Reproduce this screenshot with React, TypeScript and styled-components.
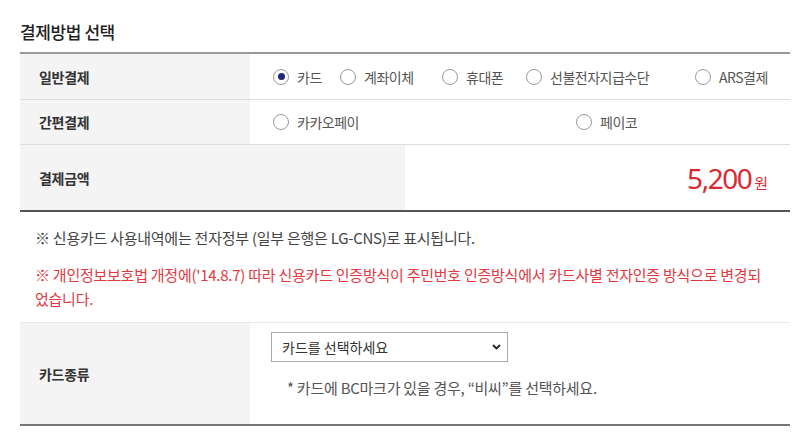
import React from "react";
import styled, { createGlobalStyle } from "styled-components";

const Global = createGlobalStyle`
  html, body { margin: 0; padding: 0; background: #fff; }
  body {
    font-family: "Noto Sans CJK KR", "Noto Sans", sans-serif;
    color: #333;
  }
  * { box-sizing: border-box; }
`;

const Page = styled.div`
  width: 811px;
  padding: 20px 21px 0 20px;
`;

const Title = styled.h2`
  margin: 0 0 8px;
  font-size: 17px;
  line-height: 24px;
  font-weight: 500;
  color: #222;
  letter-spacing: -0.4px;
`;

const Table = styled.div`
  border-top: 2px solid #999;
  border-bottom: 2px solid #555;
`;

const Row = styled.div<{ $label: number; $h: number; $line?: boolean }>`
  display: grid;
  grid-template-columns: ${(p) => p.$label}px 1fr;
  height: ${(p) => p.$h}px;
  border-bottom: ${(p) => (p.$line ? "1px solid #ddd" : "none")};
`;

const Label = styled.div`
  display: flex;
  align-items: center;
  padding-left: 19px;
  background: #f4f4f4;
  font-size: 14px;
  font-weight: 700;
  color: #333;
  letter-spacing: -0.3px;
`;

const Cell = styled.div<{ $right?: boolean }>`
  display: flex;
  align-items: center;
  justify-content: ${(p) => (p.$right ? "flex-end" : "flex-start")};
  padding: ${(p) => (p.$right ? "0 22px 0 0" : "0 0 0 23px")};
`;

const Option = styled.label<{ $w?: number }>`
  display: inline-flex;
  align-items: center;
  gap: 8px;
  width: ${(p) => (p.$w ? `${p.$w}px` : "auto")};
  font-size: 14px;
  color: #555;
  letter-spacing: -0.5px;
  white-space: nowrap;
`;

const Radio = styled.input.attrs({ type: "radio" })`
  appearance: none;
  -webkit-appearance: none;
  margin: 0;
  width: 16px;
  height: 16px;
  border: 1px solid #9a9a9a;
  border-radius: 50%;
  background: #fff;
  position: relative;
  flex: none;
  &:checked::after {
    content: "";
    position: absolute;
    inset: 3.5px;
    border-radius: 50%;
    background: #1d2878;
  }
`;

const Amount = styled.span`
  font-family: "Noto Sans", sans-serif;
  font-size: 28px;
  letter-spacing: -1.5px;
  color: #d92a32;
  line-height: 1;
`;

const Won = styled.span`
  font-family: "Noto Sans CJK KR", sans-serif;
  font-size: 15px;
  color: #d92a32;
  margin-left: 3px;
  line-height: 1;
`;

const AmountWrap = styled.div`
  display: flex;
  align-items: baseline;
`;

const Notes = styled.div`
  padding: 15px 15px 11px 15px;
  font-size: 15px;
  letter-spacing: -0.25px;
`;

const Note = styled.p<{ $red?: boolean }>`
  margin: ${(p) => (p.$red ? "14px 0 0" : "0")};
  line-height: ${(p) => (p.$red ? "24px" : "22px")};
  color: ${(p) => (p.$red ? "#e2383f" : "#444")};
`;

const CardSection = styled.div`
  display: grid;
  grid-template-columns: 230px 1fr;
  height: 104px;
  border-top: 1px solid #e8e8e8;
  border-bottom: 2px solid #777;
`;

const CardCell = styled.div`
  display: flex;
  flex-direction: column;
  align-items: flex-start;
  padding: 9px 0 0 21px;
`;

const SelectWrap = styled.div`
  position: relative;
  width: 237px;
  height: 30px;
`;

const Select = styled.select`
  appearance: none;
  -webkit-appearance: none;
  width: 100%;
  height: 100%;
  border: 1px solid #a9a9a9;
  border-radius: 0;
  background: #fff;
  padding: 0 10px;
  font-family: "Noto Sans CJK KR", sans-serif;
  font-size: 14px;
  color: #333;
  outline: none;
`;

const Chevron = styled.svg`
  position: absolute;
  right: 7px;
  top: 12px;
  pointer-events: none;
`;

const Hint = styled.p`
  margin: 16px 0 0 16px;
  line-height: 20px;
  font-size: 15px;
  color: #555;
  letter-spacing: -0.25px;
`;

export default function App() {
  return (
    <>
      <Global />
      <Page>
        <Title>결제방법 선택</Title>
        <Table>
          <Row $label={230} $h={46} $line>
            <Label>일반결제</Label>
            <Cell>
              <Option $w={67}>
                <Radio name="pay" defaultChecked />
                카드
              </Option>
              <Option $w={102}>
                <Radio name="pay" />
                계좌이체
              </Option>
              <Option $w={84}>
                <Radio name="pay" />
                휴대폰
              </Option>
              <Option $w={169}>
                <Radio name="pay" />
                선불전자지급수단
              </Option>
              <Option>
                <Radio name="pay" />
                ARS결제
              </Option>
            </Cell>
          </Row>
          <Row $label={230} $h={45} $line>
            <Label>간편결제</Label>
            <Cell>
              <Option $w={303}>
                <Radio name="pay" />
                카카오페이
              </Option>
              <Option>
                <Radio name="pay" />
                페이코
              </Option>
            </Cell>
          </Row>
          <Row $label={385} $h={65}>
            <Label>결제금액</Label>
            <Cell $right>
              <AmountWrap>
                <Amount>5,200</Amount>
                <Won>원</Won>
              </AmountWrap>
            </Cell>
          </Row>
        </Table>
        <Notes>
          <Note>※ 신용카드 사용내역에는 전자정부 (일부 은행은 LG-CNS)로 표시됩니다.</Note>
          <Note $red>
            ※ 개인정보보호법 개정에('14.8.7) 따라 신용카드 인증방식이 주민번호 인증방식에서 카드사별 전자인증 방식으로 변경되
            <br />
            었습니다.
          </Note>
        </Notes>
        <CardSection>
          <Label>카드종류</Label>
          <CardCell>
            <SelectWrap>
              <Select defaultValue="">
                <option value="">카드를 선택하세요</option>
                <option value="bc">비씨</option>
              </Select>
              <Chevron width="9" height="6" viewBox="0 0 9 6">
                <path d="M1 1 L4.5 4.5 L8 1" fill="none" stroke="#222" strokeWidth="1.8" />
              </Chevron>
            </SelectWrap>
            <Hint>* 카드에 BC마크가 있을 경우, “비씨”를 선택하세요.</Hint>
          </CardCell>
        </CardSection>
      </Page>
    </>
  );
}
